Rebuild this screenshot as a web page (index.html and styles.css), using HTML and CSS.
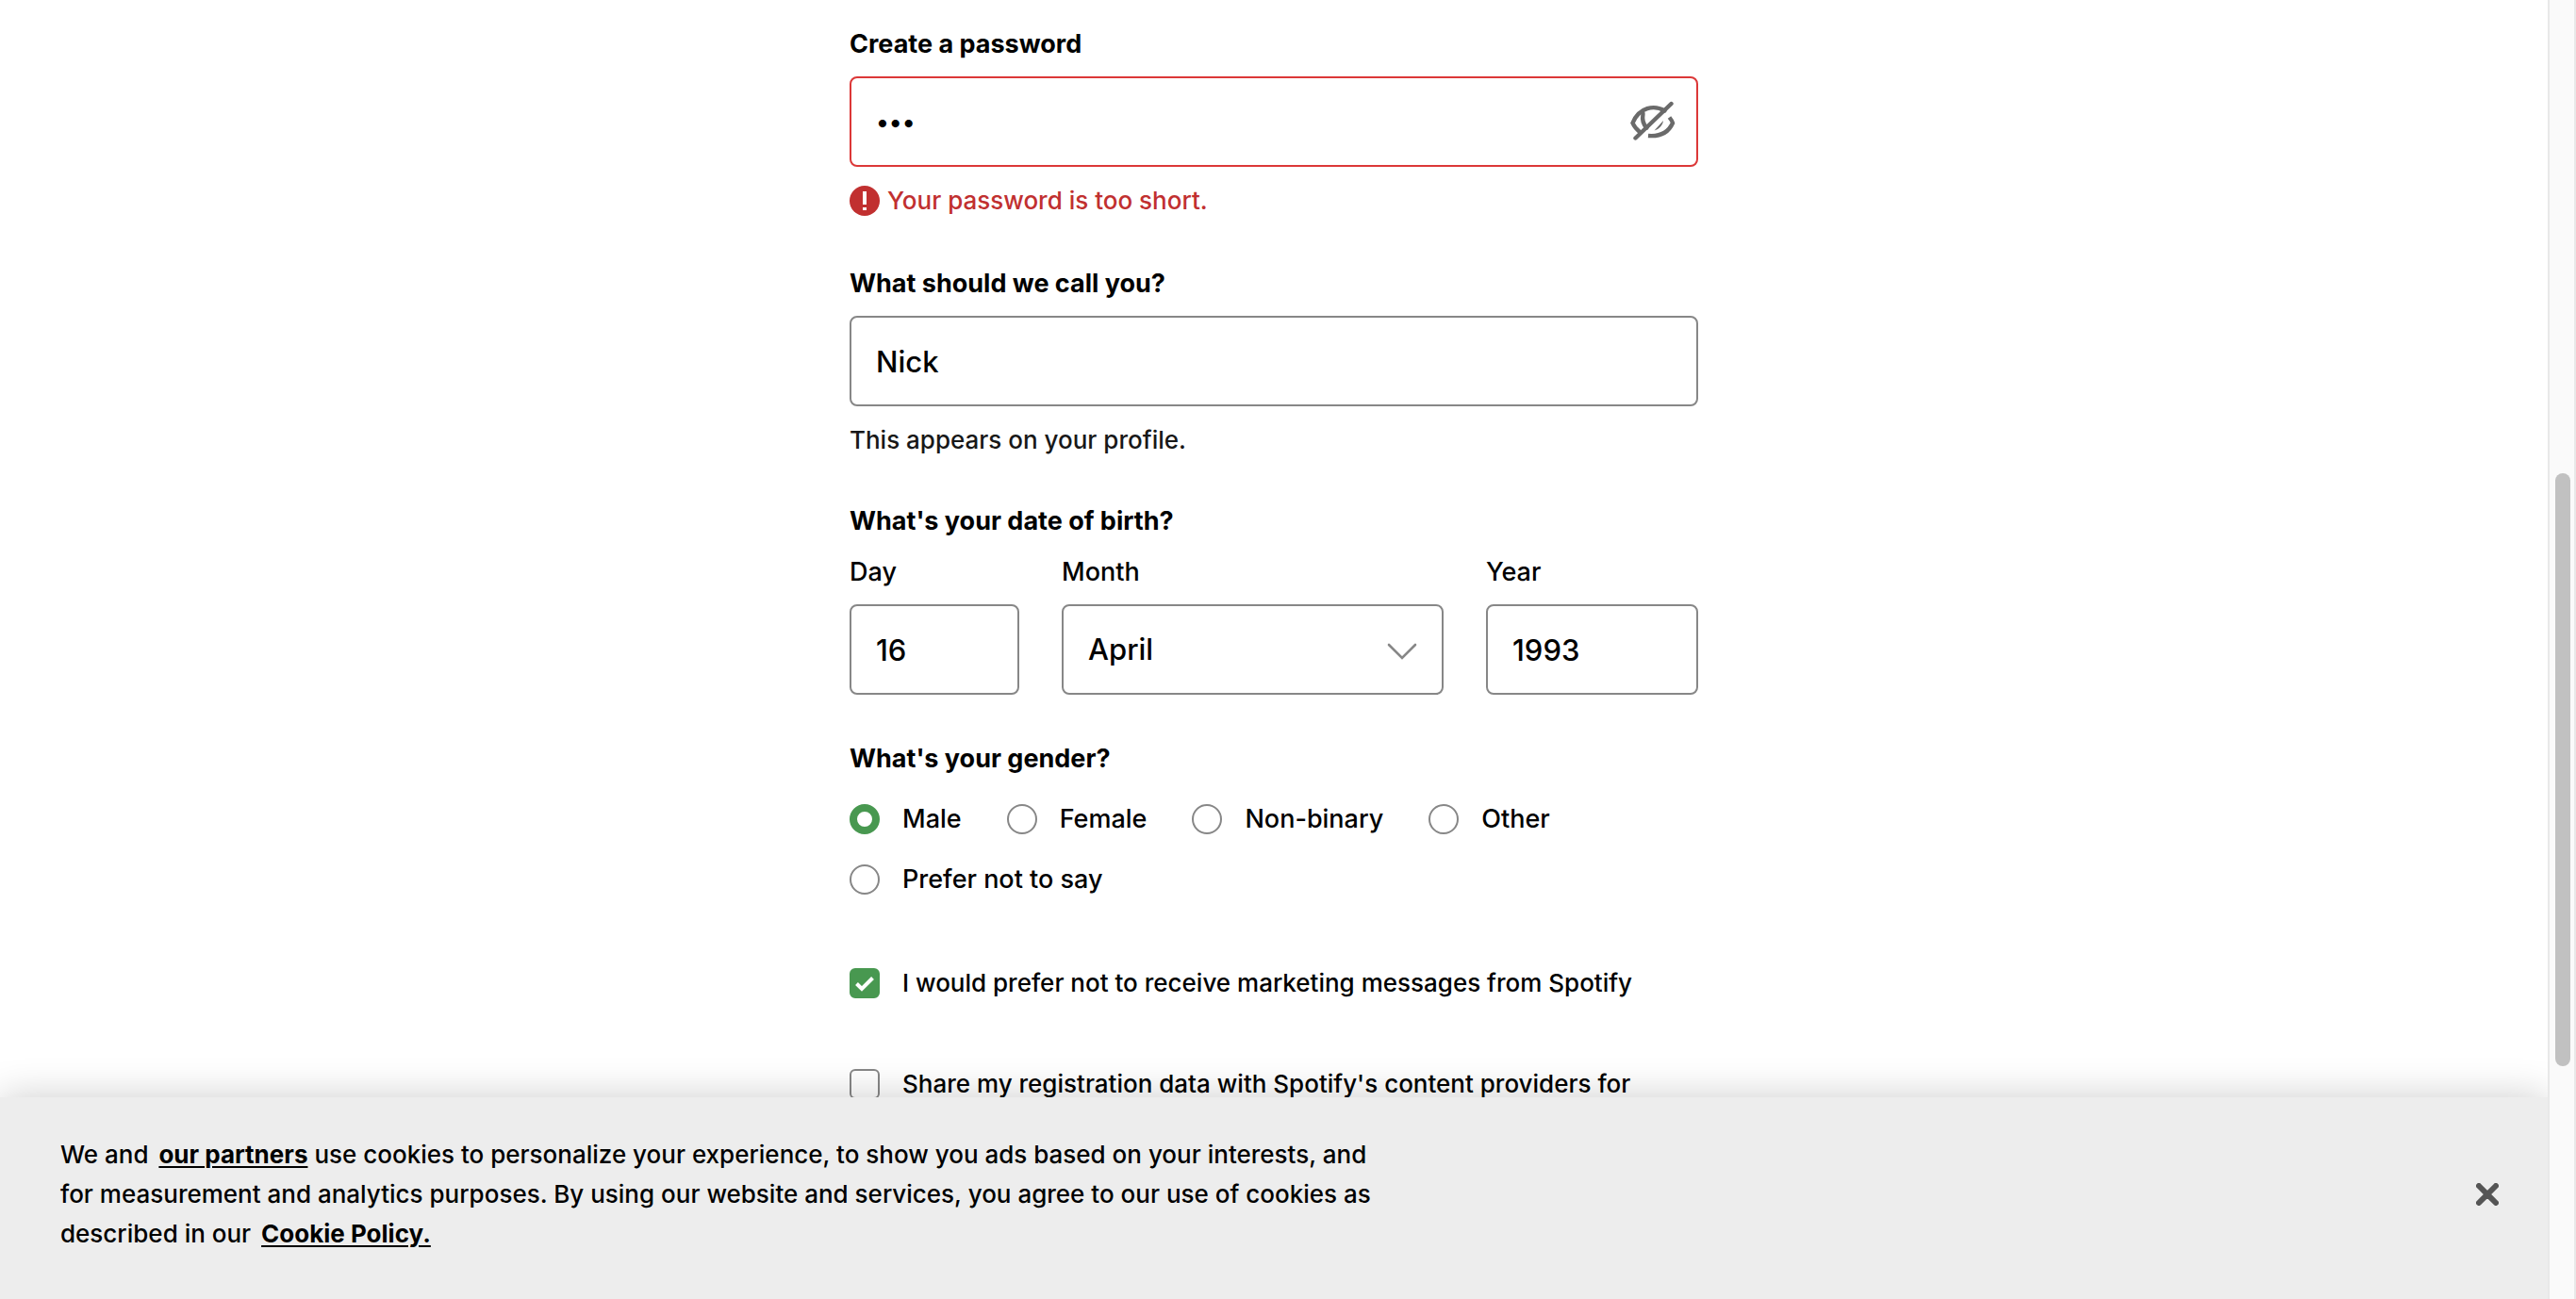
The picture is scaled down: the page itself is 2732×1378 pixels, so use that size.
FILE: index.html
```html
<!DOCTYPE html>
<html lang="en">
<head>
<meta charset="utf-8">
<meta name="viewport" content="width=device-width, initial-scale=1">
<title>Sign up - Spotify</title>
<link rel="stylesheet" href="styles.css">
</head>
<body>
<div class="page">
  <div class="viewport">
    <main class="content">
      <form class="signup">
        <div class="group">
          <label class="label" for="password">Create a password</label>
          <div class="control">
            <input class="field field-error" id="password" type="password" value="abc" aria-describedby="password-error">
            <button class="reveal" type="button" aria-label="Show password">
              <svg viewBox="0 0 48 44" width="48" height="44" fill="none" stroke="#6a6a6a" stroke-width="4.4" stroke-linecap="round">
                <path d="M5.500 39.500 43.500 3"/>
                <path d="M10.500 33.500C7.500 31 4 27 2.500 23.500c7-17 23-19.500 34-13"/>
                <path d="M13.500 13.500c-1 6-.5 11 4 15M27.500 8.800"/>
                <path d="M41.500 17.500c2 2.500 3 4 3.500 6-4.500 10-14 14.500-26 13.500" stroke-linecap="butt"/>
                <path d="M25.500 31.500c5-1.500 9-5.500 9.500-10.500l-9.500 10.500z" fill="#6a6a6a" stroke="none"/>
              </svg>
            </button>
          </div>
          <p class="hint error" id="password-error">
            <svg viewBox="0 0 32 32" width="32" height="32" aria-hidden="true">
              <circle cx="16" cy="16" r="16" fill="#c13030"/>
              <path d="M14 6h4v14h-4zM14 23h4v3h-4z" fill="#fff"/>
            </svg>
            <span>Your password is too short.</span>
          </p>
        </div>

        <div class="group">
          <label class="label" for="name">What should we call you?</label>
          <input class="field" id="name" type="text" value="Nick" aria-describedby="name-help">
          <p class="hint help" id="name-help">This appears on your profile.</p>
        </div>

        <fieldset class="group">
          <legend class="label">What's your date of birth?</legend>
          <div class="birth">
            <div class="part">
              <label for="day">Day</label>
              <input class="field" id="day" type="text" inputmode="numeric" value="16">
            </div>
            <div class="part">
              <label for="month">Month</label>
              <div class="control">
                <select class="field" id="month">
                  <option selected>April</option>
                </select>
                <svg class="chevron" viewBox="0 0 32 18" width="32" height="18" fill="none" stroke="#878787" stroke-width="2.600" stroke-linecap="round" aria-hidden="true"><path d="M2 2 16 16 30 2"/></svg>
              </div>
            </div>
            <div class="part">
              <label for="year">Year</label>
              <input class="field" id="year" type="text" inputmode="numeric" value="1993">
            </div>
          </div>
        </fieldset>

        <fieldset class="group">
          <legend class="label">What's your gender?</legend>
          <div class="choices">
            <label class="choice"><input class="radio" type="radio" name="gender" checked>Male</label>
            <label class="choice"><input class="radio" type="radio" name="gender">Female</label>
            <label class="choice"><input class="radio" type="radio" name="gender">Non-binary</label>
            <label class="choice"><input class="radio" type="radio" name="gender">Other</label>
            <label class="choice"><input class="radio" type="radio" name="gender">Prefer not to say</label>
          </div>
        </fieldset>

        <div class="consents">
          <label class="choice">
            <span class="tick">
              <input class="checkbox" type="checkbox" checked>
              <svg class="check" viewBox="0 0 32 32" width="32" height="32" fill="none" stroke="#fff" stroke-width="4" aria-hidden="true"><path d="M7.500 16.500 13 22 24.500 10.500"/></svg>
            </span>
            I would prefer not to receive marketing messages from Spotify
          </label>
          <label class="choice">
            <span class="tick"><input class="checkbox" type="checkbox"></span>
            Share my registration data with Spotify's content providers for
          </label>
        </div>
      </form>
    </main>

    <aside class="cookies" aria-label="Cookie notice">
      <p class="notice">We and <a href="#partners">our partners</a> use cookies to personalize your experience, to show you ads based on your interests, and<br>for measurement and analytics purposes. By using our website and services, you agree to our use of cookies as<br>described in our <a href="#cookies">Cookie Policy.</a></p>
      <button class="close" type="button" aria-label="Close">
        <svg viewBox="0 0 24 24" width="24" height="24" stroke="#555" stroke-width="6" stroke-linecap="round"><path d="M3 3 21 21M21 3 3 21"/></svg>
      </button>
    </aside>
  </div>
  <div class="scrollbar" aria-hidden="true"><div class="thumb"></div></div>
</div>
</body>
</html>
```
FILE: styles.css
```css
* {
  box-sizing: border-box;
}

body {
  margin: 0;
  background: #fff;
  color: #000;
  font: 500 27px/36px Inter, "Liberation Sans", sans-serif;
}

p,
fieldset {
  margin: 0;
  padding: 0;
  border: 0;
  min-width: 0;
}

.page {
  display: grid;
  grid-template-columns: 1fr 30px;
  height: 100vh;
  overflow: hidden;
}

.viewport {
  position: relative;
  overflow: hidden;
}

.signup {
  display: flex;
  flex-direction: column;
  gap: 50px;
  max-width: 900px;
  margin: 0 auto;
  padding-top: 29px;
}

.label {
  display: block;
  margin-bottom: 16px;
  padding: 0;
  font-weight: 700;
}

.control {
  position: relative;
}

.field {
  display: block;
  width: 100%;
  height: 96px;
  padding: 0 26px;
  border: 2px solid #878787;
  border-radius: 8px;
  background: #fff;
  color: #000;
  font: 500 31px/40px Inter, "Liberation Sans", sans-serif;
  appearance: none;
}

.field-error {
  border-color: #dc3838;
  font-size: 26px;
}

.reveal {
  position: absolute;
  top: 26px;
  right: 24px;
  height: 44px;
  padding: 0;
  border: 0;
  background: none;
}

.reveal svg,
.close svg {
  display: block;
}

.hint {
  margin-bottom: 2px;
  font-size: 26px;
}

.error {
  display: flex;
  align-items: center;
  gap: 8px;
  margin-top: 18px;
  color: #c13030;
}

.help {
  margin-top: 20px;
  line-height: 32px;
  color: #181818;
}

.birth {
  display: grid;
  grid-template-columns: 180fr 405fr 225fr;
  gap: 45px;
  padding-top: 2px;
}

.part {
  display: flex;
  flex-direction: column;
  gap: 16px;
}

.chevron {
  position: absolute;
  top: 41px;
  right: 28px;
  pointer-events: none;
}

.choices {
  display: flex;
  flex-wrap: wrap;
  gap: 28px 48px;
  padding-top: 12px;
}

.choice {
  display: flex;
  align-items: center;
  gap: 24px;
}

.radio,
.checkbox {
  appearance: none;
  flex: none;
  display: block;
  width: 32px;
  height: 32px;
  margin: 0;
  border: 2px solid #878787;
  background: #fff;
}

.radio {
  border-radius: 50%;
}

.radio:checked {
  border: 8px solid #489850;
}

.checkbox {
  border-radius: 6px;
}

.checkbox:checked {
  border-color: #489850;
  background: #489850;
}

.tick {
  position: relative;
}

.check {
  position: absolute;
  inset: 0;
}

.consents {
  display: flex;
  flex-direction: column;
  gap: 71px;
  padding-top: 24px;
  font-size: 26px;
}

.cookies {
  position: absolute;
  right: 0;
  bottom: 0;
  left: 0;
  display: flex;
  align-items: center;
  justify-content: space-between;
  padding: 40px 52px 48px 64px;
  background: #ededed;
  box-shadow: 0 0 40px rgba(0, 0, 0, 0.2);
  font-size: 26px;
  line-height: 42px;
}

.cookies a {
  margin-left: 4px;
  color: #000;
  font-weight: 700;
  text-decoration-thickness: 2px;
  text-underline-offset: 3px;
}

.close {
  padding: 0;
  border: 0;
  background: none;
}

.scrollbar {
  display: grid;
  grid-template-rows: 502fr 629fr 247fr;
  border: solid #e8e8e8;
  border-width: 0 2px;
  background: #fafafa;
}

.thumb {
  grid-row: 2;
  margin: 0 4px 0 6px;
  border-radius: 8px;
  background: #c1c1c1;
}
```
